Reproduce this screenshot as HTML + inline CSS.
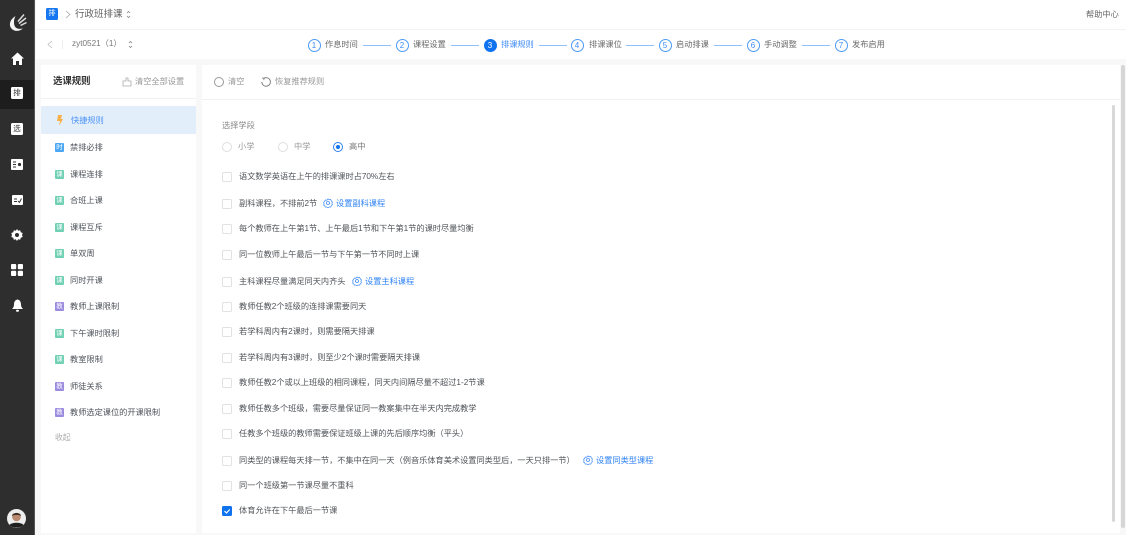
<!DOCTYPE html>
<html lang="zh"><head><meta charset="utf-8"><title>行政班排课</title>
<style>
*{box-sizing:border-box}
html,body{margin:0;padding:0;width:1126px;height:535px;overflow:hidden;background:#f8f8f8}
body{font-family:"Liberation Sans","Noto Sans CJK SC",sans-serif;font-size:8.2px;color:#666;position:relative}
#w{position:absolute;inset:0;filter:blur(.35px)}
.a,.t,.box,.rad,.ic,.n,.s,.l,.lk{position:absolute}
.a{display:block}
.t{white-space:nowrap;line-height:12px;height:12px}
.box{left:222px;width:10px;height:10px;border:1px solid #e2e2e2;border-radius:1.5px;background:#fff}
.r{left:239px;color:#505459}
.rad{width:10px;height:10px;border:1px solid #dedede;border-radius:50%;background:#fff}
.lk{color:#2f83f5;white-space:nowrap;line-height:12px;height:12px}
.n{left:55px;width:9px;height:9px;border-radius:1px;color:#fff;font-size:6.5px;line-height:9px;text-align:center}
.g{background:#6fd0b4}.p{background:#9b8ade}.b{background:#4ba7f5}
.m{left:70px;color:#4e535b;margin-top:.5px}
.s{top:38.5px;width:13px;height:13px;border:1px solid #4d9bf7;border-radius:50%;color:#3d8bf5;font-size:8px;line-height:11px;text-align:center;background:#fff;margin-left:-.5px}
.l{top:44.5px;height:1.2px;background:#8fc0fa;width:28px}
.st{top:39px;color:#6a6a6a}
.sb{position:absolute;left:11px;width:12px;height:12px;background:#fff;border-radius:1.5px;color:#333;font-size:7.5px;line-height:12px;text-align:center}
</style></head><body><div id="w">
<div class="a" style="left:0;top:0;width:35px;height:535px;background:#2e2e2e;border-right:1px solid #555"></div>
<div class="a" style="left:0;top:80px;width:34px;height:29px;background:#1d1d1d"></div>
<svg class="a" style="left:8px;top:12px" width="19" height="21" viewBox="0 0 19 21"><path d="M7.500 4C2.500 7 .5 12 3 16c2.500 3.500 8 4 12 .5-4.500 1-7.500 0-8.500-3C5.500 10.500 6 7 7.500 4z" fill="#f4f4f4"/><path d="M10 9.500L16 2.500M11 11.500l7-5.500M12.500 13.500l6-3" stroke="#ddd" stroke-width="1.500" fill="none"/></svg>
<svg class="a" style="left:11px;top:52px" width="13" height="13" viewBox="0 0 13 13"><path d="M6.500.5L13 6.500h-2V13H8V9H5v4H2V6.500H0z" fill="#fff"/></svg>
<div class="sb" style="top:87px">排</div>
<div class="sb" style="top:123px">选</div>
<svg class="a" style="left:11px;top:159px" width="12" height="11" viewBox="0 0 12 11"><rect width="12" height="11" rx="1" fill="#fff"/><path d="M2 3h3M2 5.500h3M2 8h3" stroke="#333"/><circle cx="8.500" cy="5.500" r="1.600" fill="#333"/></svg>
<svg class="a" style="left:12px;top:195px" width="11" height="10" viewBox="0 0 11 10"><rect width="11" height="10" rx="1" fill="#fff"/><path d="M2 4h3M2 6.500h3" stroke="#333"/><path d="M6 6l1.500 1.300L9.500 3.500" stroke="#333" fill="none"/></svg>
<svg class="a" style="left:11px;top:229px" width="12" height="12" viewBox="0 0 12 12"><path d="M6 0l1.200 1.800 2-.5.500 2 2 .7-.7 2 .7 2-2 .7-.5 2-2-.5L6 12l-1.200-1.800-2 .5-.5-2-2-.7.7-2-.7-2 2-.7.5-2 2 .5z" fill="#fff"/><circle cx="6" cy="6" r="2" fill="#2e2e2e"/></svg>
<svg class="a" style="left:11px;top:264px" width="12" height="12" viewBox="0 0 12 12"><rect width="5.200" height="5.200" rx="1" fill="#fff"/><rect x="6.800" width="5.200" height="5.200" rx="1" fill="#fff"/><rect y="6.800" width="5.200" height="5.200" rx="1" fill="#fff"/><rect x="6.800" y="6.800" width="5.200" height="5.200" rx="1" fill="#fff"/></svg>
<svg class="a" style="left:12px;top:299px" width="11" height="13" viewBox="0 0 11 13"><path d="M5.500 0.500C3 1 2 3 2 5.500c0 2-.8 3.500-2 4.500h11c-1.200-1-2-2.500-2-4.500 0-2.500-1-4.500-3.500-5z" fill="#fff"/><rect x="4" y="10.800" width="3" height="2" rx="1" fill="#fff"/></svg>
<svg class="a" style="left:7px;top:509px" width="19" height="19" viewBox="0 0 19 19"><circle cx="9.500" cy="9.500" r="9.500" fill="#eee"/><circle cx="9.500" cy="8" r="4.300" fill="#b98a70"/><path d="M5 7c0-4 9-4 9 0-2-1.500-7-1.500-9 0z" fill="#3a3028"/><path d="M2.500 16c2-3 12-3 14 0-3 3.500-11 3.500-14 0z" fill="#1f1f1f"/></svg>

<div class="a" style="left:36px;top:0;width:1090px;height:59px;background:#fff"></div>
<div class="a" style="left:36px;top:29px;width:1090px;height:1px;background:#f3f3f3"></div>
<div class="a" style="left:46px;top:8px;width:12px;height:12px;background:#1677f0;border-radius:1.500px;color:#fff;font-size:7px;line-height:12px;text-align:center">排</div>
<svg class="a" style="left:65px;top:10px" width="6" height="9" viewBox="0 0 6 9"><path d="M1 1l4 3.500L1 8" stroke="#aaa" fill="none" stroke-width=".8"/></svg>
<div class="t" style="left:75px;top:8px;font-size:9.500px;line-height:13px;color:#5f5f5f">行政班排课</div>
<svg class="a" style="left:126px;top:10px" width="5" height="9" viewBox="0 0 5 9"><path d="M1 3l1.500-1.500L4 3M1 6l1.500 1.500L4 6" stroke="#888" fill="none" stroke-width=".8"/></svg>
<div class="t" style="left:1086px;top:9px;color:#666">帮助中心</div>
<svg class="a" style="left:47px;top:40px" width="6" height="9" viewBox="0 0 6 9"><path d="M5 1L1 4.500 5 8" stroke="#bbb" fill="none" stroke-width=".8"/></svg>
<div class="a" style="left:62px;top:40px;width:1px;height:9px;background:#eee"></div>
<div class="t" style="left:72px;top:38px;color:#777">zyt0521（1）</div>
<svg class="a" style="left:128px;top:40px" width="5" height="9" viewBox="0 0 5 9"><path d="M1 3l1.500-1.500L4 3M1 6l1.500 1.500L4 6" stroke="#888" fill="none" stroke-width=".8"/></svg>

<div class="s" style="left:308px">1</div><div class="t st" style="left:325px">作息时间</div><div class="l" style="left:363px"></div>
<div class="s" style="left:396px">2</div><div class="t st" style="left:413px">课程设置</div><div class="l" style="left:451px"></div>
<div class="s" style="left:484px;background:#0f72ee;border-color:#0f72ee;color:#fff">3</div><div class="t st" style="left:501px;color:#3d8bf5">排课规则</div><div class="l" style="left:539px"></div>
<div class="s" style="left:571px">4</div><div class="t st" style="left:589px">排课课位</div><div class="l" style="left:626px"></div>
<div class="s" style="left:659px">5</div><div class="t st" style="left:676px">启动排课</div><div class="l" style="left:714px"></div>
<div class="s" style="left:747px">6</div><div class="t st" style="left:764px">手动调整</div><div class="l" style="left:802px"></div>
<div class="s" style="left:835px">7</div><div class="t st" style="left:852px">发布启用</div>

<div class="a" style="left:41px;top:65px;width:155px;height:468px;background:#fff"></div>
<div class="a" style="left:41px;top:98px;width:155px;height:1px;background:#f1f1f1"></div>
<div class="t" style="left:53px;top:75px;font-size:9.400px;font-weight:bold;color:#333">选课规则</div>
<svg class="a" style="left:122px;top:77px" width="10" height="10" viewBox="0 0 10 10"><path d="M4 1h2v3h3v5H1V4h3z" fill="none" stroke="#aaa" stroke-width=".8"/></svg>
<div class="t" style="left:135px;top:76px;color:#999">清空全部设置</div>
<div class="a" style="left:41px;top:106px;width:155px;height:28px;background:#e3eefb"></div>
<svg class="a" style="left:57px;top:115px" width="6" height="11" viewBox="0 0 6 11"><path d="M1 0h4L4 4h2L2 11l1-5H0z" fill="#f8b04a"/></svg>
<div class="t" style="left:71px;top:115px;color:#4d94f5">快捷规则</div>
<div class="n b" style="top:143px">时</div><div class="t m" style="top:141px">禁排必排</div>
<div class="n g" style="top:170px">课</div><div class="t m" style="top:168px">课程连排</div>
<div class="n g" style="top:196px">课</div><div class="t m" style="top:194px">合班上课</div>
<div class="n g" style="top:223px">课</div><div class="t m" style="top:221px">课程互斥</div>
<div class="n g" style="top:249px">课</div><div class="t m" style="top:247px">单双周</div>
<div class="n g" style="top:276px">课</div><div class="t m" style="top:274px">同时开课</div>
<div class="n p" style="top:302px">教</div><div class="t m" style="top:300px">教师上课限制</div>
<div class="n g" style="top:329px">课</div><div class="t m" style="top:327px">下午课时限制</div>
<div class="n g" style="top:355px">课</div><div class="t m" style="top:353px">教室限制</div>
<div class="n p" style="top:382px">教</div><div class="t m" style="top:380px">师徒关系</div>
<div class="n p" style="top:408px">教</div><div class="t m" style="top:406px">教师选定课位的开课限制</div>
<div class="t" style="left:55px;top:432px;color:#aaa;font-size:7.800px">收起</div>

<div class="a" style="left:202px;top:65px;width:918px;height:468px;background:#fff"></div>
<div class="a" style="left:202px;top:99px;width:918px;height:1px;background:#f1f1f1"></div>
<div class="a" style="left:214px;top:77px;width:10px;height:10px;border:1px solid #999;border-radius:50%"></div>
<div class="t" style="left:228px;top:76px;color:#999">清空</div>
<svg class="a" style="left:261px;top:77px" width="10" height="10" viewBox="0 0 10 10"><path d="M2.500 1.500A4.300 4.300 0 1 1 .8 5" fill="none" stroke="#777" stroke-width=".9"/><path d="M1 1l2 .2-.2 2" fill="none" stroke="#777" stroke-width=".8"/></svg>
<div class="t" style="left:275px;top:76px;color:#999">恢复推荐规则</div>
<div class="a" style="left:1112px;top:105px;width:3px;height:417px;background:#d8d8d8;border-radius:2px"></div>
<div class="a" style="left:1121px;top:65px;width:4px;height:463px;background:#d6d6d6;border-radius:2px"></div>

<div class="t" style="left:222px;top:120px;color:#888">选择学段</div>
<div class="rad" style="left:222px;top:142px"></div><div class="t" style="left:238px;top:141px;color:#999">小学</div>
<div class="rad" style="left:278px;top:142px"></div><div class="t" style="left:294px;top:141px;color:#999">中学</div>
<div class="rad" style="left:333px;top:142px;border-color:#2a80f0"></div><div class="a" style="left:336px;top:145px;width:4px;height:4px;border-radius:50%;background:#0f72ee"></div><div class="t" style="left:349px;top:141px;color:#777">高中</div>

<div class="box" style="top:172px"></div><div class="t r" style="top:171px">语文数学英语在上午的排课课时占70%左右</div>
<div class="box" style="top:199px"></div><div class="t r" style="top:198px">副科课程，不排前2节</div>
<svg class="a" style="left:323px;top:198px" width="10" height="10" viewBox="0 0 10 10"><path d="M5 .5l1.300 1 1.700-.2.700 1.500 1.200 1.200-.6 1.500.6 1.500-1.200 1.200-.7 1.500-1.700-.2-1.300 1-1.300-1-1.700.2-.7-1.500L.1 7.500l.6-1.500-.6-1.500L1.300 3.300 2 1.800l1.700.2z" transform="translate(.5 .4) scale(.9)" fill="none" stroke="#3d8bf5" stroke-width=".8"/><circle cx="5" cy="5" r="1.500" fill="none" stroke="#3d8bf5" stroke-width=".8"/></svg>
<div class="lk" style="left:336px;top:198px">设置副科课程</div>
<div class="box" style="top:224px"></div><div class="t r" style="top:223px">每个教师在上午第1节、上午最后1节和下午第1节的课时尽量均衡</div>
<div class="box" style="top:250px"></div><div class="t r" style="top:249px">同一位教师上午最后一节与下午第一节不同时上课</div>
<div class="box" style="top:277px"></div><div class="t r" style="top:276px">主科课程尽量满足同天内齐头</div>
<svg class="a" style="left:352px;top:276px" width="10" height="10" viewBox="0 0 10 10"><path d="M5 .5l1.300 1 1.700-.2.700 1.500 1.200 1.200-.6 1.500.6 1.500-1.200 1.200-.7 1.500-1.700-.2-1.300 1-1.300-1-1.700.2-.7-1.500L.1 7.500l.6-1.500-.6-1.500L1.300 3.300 2 1.800l1.700.2z" transform="translate(.5 .4) scale(.9)" fill="none" stroke="#3d8bf5" stroke-width=".8"/><circle cx="5" cy="5" r="1.500" fill="none" stroke="#3d8bf5" stroke-width=".8"/></svg>
<div class="lk" style="left:365px;top:276px">设置主科课程</div>
<div class="box" style="top:302px"></div><div class="t r" style="top:301px">教师任教2个班级的连排课需要同天</div>
<div class="box" style="top:327px"></div><div class="t r" style="top:326px">若学科周内有2课时，则需要隔天排课</div>
<div class="box" style="top:353px"></div><div class="t r" style="top:352px">若学科周内有3课时，则至少2个课时需要隔天排课</div>
<div class="box" style="top:378px"></div><div class="t r" style="top:377px">教师任教2个或以上班级的相同课程，同天内间隔尽量不超过1-2节课</div>
<div class="box" style="top:404px"></div><div class="t r" style="top:402.500px">教师任教多个班级，需要尽量保证同一教案集中在半天内完成教学</div>
<div class="box" style="top:429px"></div><div class="t r" style="top:428px">任教多个班级的教师需要保证班级上课的先后顺序均衡（平头）</div>
<div class="box" style="top:456px"></div><div class="t r" style="top:454.500px">同类型的课程每天排一节，不集中在同一天（例音乐体育美术设置同类型后，一天只排一节）</div>
<svg class="a" style="left:583px;top:455px" width="10" height="10" viewBox="0 0 10 10"><path d="M5 .5l1.300 1 1.700-.2.700 1.500 1.200 1.200-.6 1.500.6 1.500-1.200 1.200-.7 1.500-1.700-.2-1.300 1-1.300-1-1.700.2-.7-1.500L.1 7.500l.6-1.500-.6-1.500L1.300 3.300 2 1.800l1.700.2z" transform="translate(.5 .4) scale(.9)" fill="none" stroke="#3d8bf5" stroke-width=".8"/><circle cx="5" cy="5" r="1.500" fill="none" stroke="#3d8bf5" stroke-width=".8"/></svg>
<div class="lk" style="left:596px;top:454.500px">设置同类型课程</div>
<div class="box" style="top:481px"></div><div class="t r" style="top:480px">同一个班级第一节课尽量不重科</div>
<div class="box" style="top:506px;background:#0f72ee;border-color:#0f72ee"></div><svg class="a" style="left:222px;top:506px" width="10" height="10" viewBox="0 0 10 10"><path d="M2.500 5l2 2 3.200-3.500" fill="none" stroke="#fff" stroke-width="1.200"/></svg><div class="t r" style="top:505px">体育允许在下午最后一节课</div>
</div></body></html>
